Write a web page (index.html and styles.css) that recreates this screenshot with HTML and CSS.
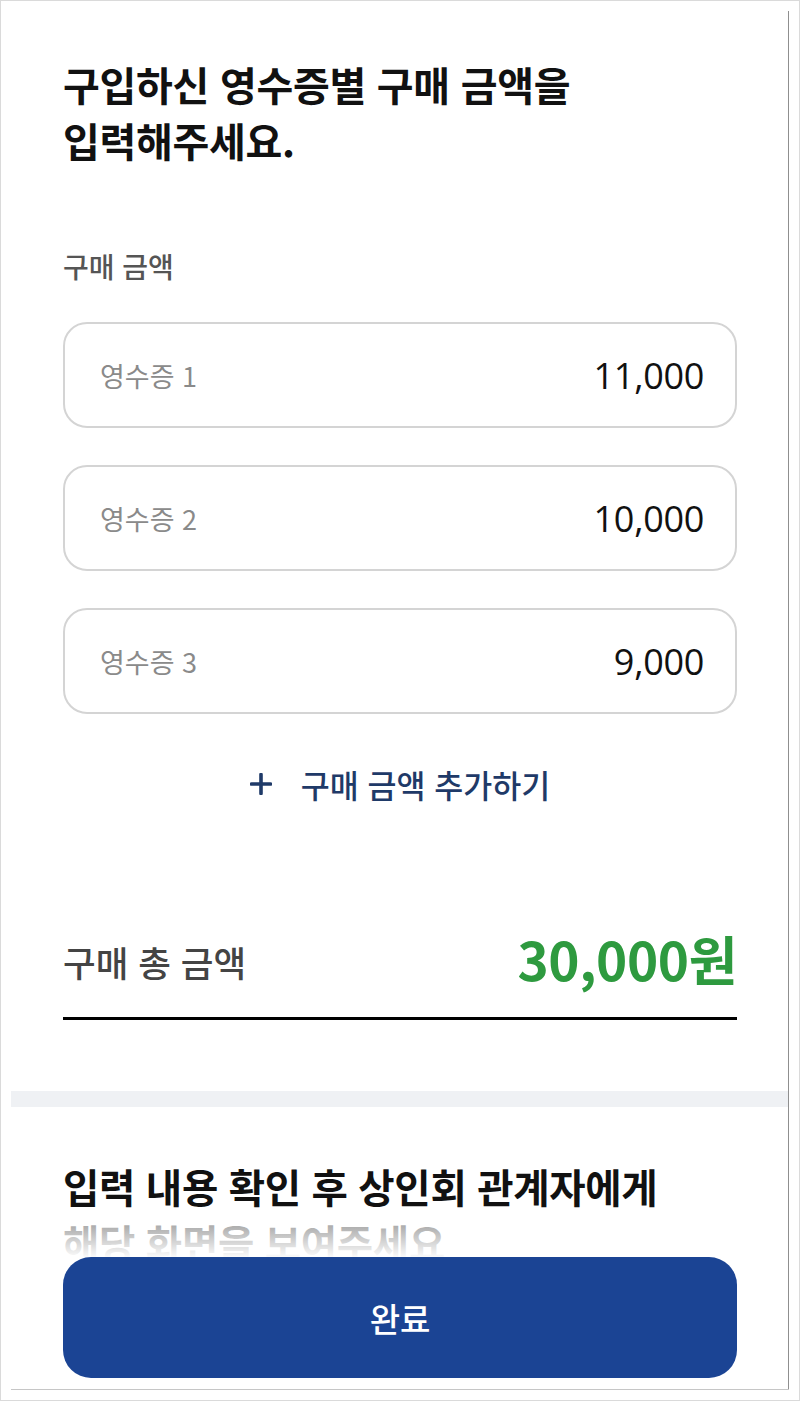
FILE: index.html
```html
<!DOCTYPE html>
<html lang="ko">
<head>
<meta charset="utf-8">
<title>구매 금액 입력</title>
<link rel="stylesheet" href="styles.css">
</head>
<body>
  <div class="frame">
    <main class="content">
      <h1 class="title">구입하신 영수증별 구매 금액을<br>입력해주세요.</h1>
      <div class="field-label">구매 금액</div>
      <div class="receipts">
        <div class="receipt"><span class="r-label">영수증 1</span><span class="r-value">11,000</span></div>
        <div class="receipt"><span class="r-label">영수증 2</span><span class="r-value">10,000</span></div>
        <div class="receipt"><span class="r-label">영수증 3</span><span class="r-value">9,000</span></div>
      </div>
      <button class="add" type="button">
        <svg class="plus" width="22" height="22" viewBox="0 0 22 22" aria-hidden="true">
          <path d="M11 1.5V20.5M1.5 11H20.5" stroke="#1f3a68" stroke-width="3.6" stroke-linecap="round" fill="none"/>
        </svg>
        <span>구매 금액 추가하기</span>
      </button>
      <div class="total">
        <span class="total-label">구매 총 금액</span>
        <span class="total-value">30,000원</span>
      </div>
    </main>
    <div class="divider"></div>
    <section class="notice">
      <h2 class="notice-title">입력 내용 확인 후 상인회 관계자에게<br>해당 화면을 보여주세요</h2>
    </section>
    <div class="bottom-bar">
      <button class="done" type="button">완료</button>
    </div>
  </div>
</body>
</html>
```
FILE: styles.css
```css
* { box-sizing: border-box; }
html, body { height: 1401px; }
body {
  margin: 0;
  border: 1px solid #dadada;
  background: #fff;
  font-family: "Noto Sans CJK KR", "Noto Sans", sans-serif;
  color: #111;
  overflow: hidden;
}
.frame {
  position: relative;
  margin-left: 10px;
  width: 778px;
  height: 1389px;
  border-bottom: 1px solid #c6c6c6;
  overflow: hidden;
  background: #fff;
}
.frame::after {
  content: "";
  position: absolute;
  right: 0;
  top: 10px;
  bottom: 0;
  width: 1px;
  background: #8f8f8f;
}
.content {
  padding: 55px 52px 0 52px;
}
.title {
  margin: 0;
  font-size: 40px;
  line-height: 56px;
  font-weight: 700;
  color: #111;
  letter-spacing: -0.3px;
}
.field-label {
  margin-top: 80px;
  font-size: 28px;
  line-height: 36px;
  font-weight: 500;
  color: #555;
}
.receipts {
  margin-top: 38px;
  display: flex;
  flex-direction: column;
  gap: 37px;
}
.receipt {
  height: 106px;
  border: 2px solid #d4d4d4;
  border-radius: 24px;
  display: flex;
  align-items: center;
  justify-content: space-between;
  padding: 0 31px 0 35px;
}
.r-label {
  font-size: 27px;
  color: #8a8a8a;
  font-weight: 400;
}
.r-value {
  font-family: "Open Sans", "Noto Sans", sans-serif;
  font-size: 36px;
  color: #111;
  font-weight: 400;
  letter-spacing: -0.3px;
}
.add {
  margin-top: 50px;
  width: 100%;
  height: 40px;
  border: none;
  background: none;
  padding: 0;
  display: flex;
  align-items: center;
  justify-content: center;
  gap: 29px;
  font-family: inherit;
  font-size: 31.5px;
  font-weight: 500;
  color: #1f3a68;
  cursor: pointer;
}
.plus { display: block; flex: none; }
.total {
  margin-top: 127px;
  height: 60px;
  padding-bottom: 26px;
  border-bottom: 3px solid #000;
  display: flex;
  align-items: center;
  justify-content: space-between;
  box-sizing: content-box;
}
.total-label {
  font-size: 35.5px;
  font-weight: 500;
  color: #444;
}
.total-value {
  font-size: 53px;
  font-weight: 700;
  color: #2e9a3f;
  letter-spacing: -0.4px;
  margin-top: -6px;
}
.divider {
  margin-top: 71px;
  height: 16px;
  background: #eff1f4;
}
.notice {
  padding: 51px 52px 0 52px;
}
.notice-title {
  margin: 0;
  font-size: 39.5px;
  line-height: 56px;
  font-weight: 700;
  color: #111;
  letter-spacing: -0.3px;
}
.bottom-bar {
  position: absolute;
  left: 0;
  right: 1px;
  bottom: 0;
  padding: 0 51px 11px 52px;
  background: #fff;
}
.bottom-bar::before {
  content: "";
  position: absolute;
  left: 0;
  right: 0;
  top: -46px;
  height: 46px;
  background: linear-gradient(rgba(255,255,255,0.5), rgba(255,255,255,0.98));
}
.done {
  display: block;
  width: 100%;
  height: 121px;
  border: none;
  border-radius: 28px;
  background: #1b4494;
  color: #fff;
  font-family: inherit;
  font-size: 33px;
  font-weight: 500;
  cursor: pointer;
}
```
